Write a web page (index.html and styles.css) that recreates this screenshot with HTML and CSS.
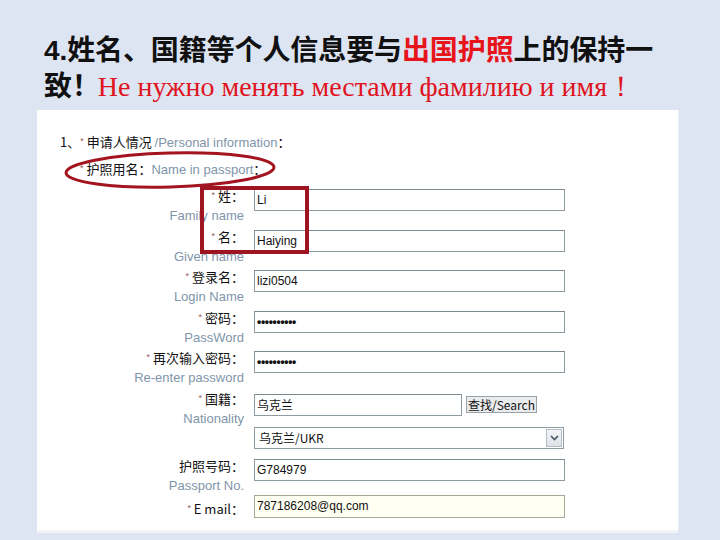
FILE: index.html
```html
<!DOCTYPE html>
<html>
<head>
<meta charset="utf-8">
<link rel="stylesheet" href="styles.css">
</head>
<body>
<div class="title">
  <div class="t-line"><span class="num">4.</span>姓名、国籍等个人信息要与<span class="red">出国护照</span>上的保持一</div>
  <div class="t-line">致！<span class="ru">Не нужно менять местами фамилию и имя！</span></div>
</div>
<div class="panel">
  <div class="sec">1、<span class="ast">*</span> 申请人情况 <span class="en">/Personal information</span>：</div>
  <div class="sub"><span class="ast">*</span> 护照用名：<span class="en">Name in passport</span>：</div>

  <div class="row">
    <div class="lab"><div class="cn"><span class="ast">*</span> 姓：</div><div class="en">Family name</div></div>
    <div class="inp">Li</div>
  </div>
  <div class="row">
    <div class="lab"><div class="cn"><span class="ast">*</span> 名：</div><div class="en">Given name</div></div>
    <div class="inp">Haiying</div>
  </div>
  <div class="row">
    <div class="lab"><div class="cn"><span class="ast">*</span> 登录名：</div><div class="en">Login Name</div></div>
    <div class="inp">lizi0504</div>
  </div>
  <div class="row">
    <div class="lab"><div class="cn"><span class="ast">*</span> 密码：</div><div class="en">PassWord</div></div>
    <div class="inp dots">••••••••••</div>
  </div>
  <div class="row">
    <div class="lab"><div class="cn"><span class="ast">*</span> 再次输入密码：</div><div class="en">Re-enter password</div></div>
    <div class="inp dots">••••••••••</div>
  </div>
  <div class="row row-nat">
    <div class="lab"><div class="cn"><span class="ast">*</span> 国籍：</div><div class="en">Nationality</div></div>
    <div class="inp short">乌克兰</div>
    <div class="btn">查找/Search</div>
  </div>
  <div class="row row-sel">
    <div class="sel">乌克兰/UKR
      <span class="arrow"><svg width="9" height="6" viewBox="0 0 9 6"><path d="M1 1 L4.5 4.5 L8 1" fill="none" stroke="#4a5560" stroke-width="1.6"/></svg></span>
    </div>
  </div>
  <div class="row">
    <div class="lab"><div class="cn">护照号码：</div><div class="en">Passport No.</div></div>
    <div class="inp">G784979</div>
  </div>
  <div class="row row-mail">
    <div class="lab"><div class="cn"><span class="ast">*</span> E mail：</div></div>
    <div class="inp mail">787186208@qq.com</div>
  </div>

  <svg class="ellipse" width="214" height="40" viewBox="0 0 214 40">
    <ellipse cx="107" cy="20" rx="104" ry="17" fill="none" stroke="#a3141f" stroke-width="3" transform="rotate(-1.5 107 20)"/>
  </svg>
  <div class="box"></div>
</div>
</body>
</html>
```
FILE: styles.css
```css
html, body {
  margin: 0;
  padding: 0;
}
body {
  background: #dde5f2;
  width: 720px;
  height: 540px;
  overflow: hidden;
}
.title {
  padding: 30px 0 0 44px;
  font-family: "Noto Sans CJK SC", sans-serif;
  font-weight: 700;
  font-size: 28px;
  line-height: 36px;
  color: #111;
  height: 80px;
}
.t-line {
  white-space: nowrap;
  height: 36px;
  letter-spacing: -0.1px;
}
.num {
  font-family: "Liberation Sans", sans-serif;
  font-weight: 700;
}
.red {
  color: #e8141c;
}
.ru {
  font-family: "Liberation Serif", serif;
  font-weight: 400;
  font-size: 28px;
  color: #e0141e;
  margin-left: -2px;
  letter-spacing: 0;
}
.panel {
  position: relative;
  margin-left: 37px;
  width: 641px;
  height: 420px;
  background: #fff;
  box-shadow: 0 3px 0 #f2f4f8, 1px 0 0 #eef1f6;
  padding-top: 22px;
  box-sizing: border-box;
  font-family: "Noto Sans CJK SC", "Liberation Sans", sans-serif;
  font-size: 13px;
  color: #111;
}
.sec {
  padding-left: 23px;
  height: 20px;
  line-height: 20px;
  white-space: nowrap;
}
.sub {
  padding-left: 43px;
  height: 20px;
  line-height: 20px;
  margin-top: 7px;
  white-space: nowrap;
}
.en {
  font-family: "Liberation Sans", sans-serif;
  color: #7f95aa;
}
.ast {
  font-family: "Liberation Sans", sans-serif;
  font-size: 9px;
  line-height: 0;
  color: #9a5a5a;
  vertical-align: 3px;
}
.row {
  display: flex;
  align-items: flex-start;
  gap: 10px;
  height: 40.5px;
}
.sub + .row {
  margin-top: 7px;
}
.lab {
  width: 207px;
  text-align: right;
  line-height: 20px;
  white-space: nowrap;
}
.lab .cn, .lab .en {
  height: 20px;
}
.inp {
  margin-top: 3px;
  width: 311px;
  height: 22px;
  box-sizing: border-box;
  border: 1px solid #8f9ba3;
  border-top-color: #7d8a92;
  background: #fff;
  font-family: "Liberation Sans", sans-serif;
  font-size: 12px;
  line-height: 20px;
  padding-left: 2px;
  color: #111;
}
.inp.short {
  width: 208px;
  font-family: "Noto Sans CJK SC", sans-serif;
}
.dots {
  font-weight: 700;
  letter-spacing: -0.3px;
}
.row-nat .inp {
  margin-top: 5px;
}
.btn {
  margin-top: 7px;
  margin-left: -6px;
  height: 17px;
  box-sizing: border-box;
  border: 1px solid #9aa3aa;
  background: #e9ebed;
  font-size: 12px;
  line-height: 15px;
  padding: 0 1px;
  white-space: nowrap;
}
.row-sel {
  height: 29px;
  margin-top: -2px;
  padding-left: 217px;
}
.sel {
  width: 310px;
  height: 22px;
  box-sizing: border-box;
  border: 1px solid #8f9ba3;
  padding-left: 4px;
  line-height: 20px;
  font-size: 12px;
  display: flex;
  justify-content: space-between;
  align-items: center;
  font-family: "Noto Sans CJK SC", sans-serif;
}
.arrow {
  width: 16px;
  height: 18px;
  margin-right: 1px;
  box-sizing: border-box;
  border: 1px solid #b4bcc4;
  background: linear-gradient(#f3f5f8, #dde2e8);
  display: flex;
  align-items: center;
  justify-content: center;
}
.row-mail {
  margin-top: -2px;
}
.row-mail .lab {
  padding-top: 4px;
}
.row-mail .inp {
  margin-top: 0;
  height: 23px;
  background: #fffff2;
  border-color: #a8a89a;
}
.ellipse {
  position: absolute;
  left: 26px;
  top: 40px;
}
.box {
  position: absolute;
  left: 163px;
  top: 76px;
  width: 109px;
  height: 68px;
  box-sizing: border-box;
  border: 4px solid #9e1420;
}
```
